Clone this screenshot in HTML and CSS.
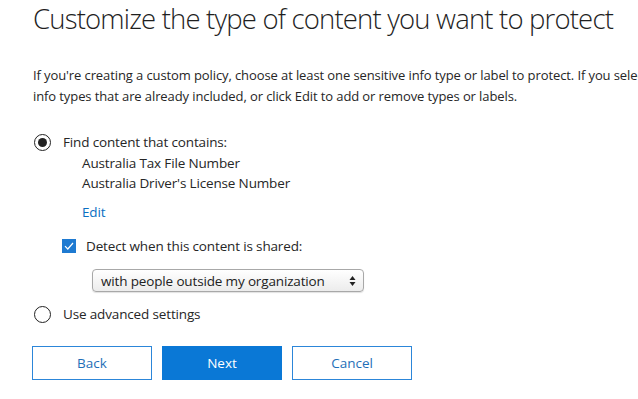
FILE: index.html
```html
<!DOCTYPE html>
<html lang="en">
<head>
<meta charset="UTF-8" />
<meta name="viewport" content="width=device-width, initial-scale=1" />
<title>Customize content</title>
<link rel="stylesheet" href="styles.css">
</head>
<body>

<div id="page">
  <h1 class="title">Customize the type of content you want to protect</h1>

  <p class="intro">If you're creating a custom policy, choose at least one sensitive info type or label to protect. If you select a template, you can keep the<br>info types that are already included, or click Edit to add or remove types or labels.</p>

  <div class="option">
    <span class="radio checked"></span>
    <span class="option-label">Find content that contains:</span>
  </div>
  <div class="types">
    <div>Australia Tax File Number</div>
    <div>Australia Driver's License Number</div>
    <a class="edit-link" href="#">Edit</a>
  </div>

  <div class="shared">
    <span class="checkbox">
      <svg width="10" height="8" viewBox="0 0 10 8"><path d="M1 4.2 L3.8 7 L9 1" fill="none" stroke="#fff" stroke-width="1.2"/></svg>
    </span>
    <span class="option-label">Detect when this content is shared:</span>
  </div>
  <div class="select-row">
    <div class="select">
      <span>with people outside my organization</span>
      <svg width="7" height="12" viewBox="0 0 7 12"><path d="M0.5 5 L3.5 1 L6.5 5 Z M0.5 7 L3.5 11 L6.5 7 Z" fill="#222"/></svg>
    </div>
  </div>

  <div class="option advanced">
    <span class="radio"></span>
    <span class="option-label">Use advanced settings</span>
  </div>

  <div class="buttons">
    <button class="btn">Back</button>
    <button class="btn primary">Next</button>
    <button class="btn">Cancel</button>
  </div>
</div>

</body>
</html>
```

FILE: styles.css
```css
html, body {
  margin: 0;
  padding: 0;
  background: #fff;
  overflow: hidden;
}

#page {
  width: 638px;
  height: 399px;
  padding: 0 0 0 33px;
  box-sizing: border-box;
  font-family: 'Open Sans', 'Noto Sans', sans-serif;
  color: #262626;
  overflow: hidden;
}

.title {
  margin: 0;
  padding-top: 1px;
  font-size: 27.5px;
  font-weight: 300;
  line-height: 36px;
  white-space: nowrap;
  letter-spacing: -0.82px;
  color: #1f1f1f;
}

.intro {
  margin: 28px 0 0;
  font-size: 13px;
  line-height: 21px;
  letter-spacing: -0.1px;
  white-space: nowrap;
}

.option {
  display: flex;
  align-items: center;
  gap: 12px;
  margin-top: 25px;
  height: 20px;
}

.option-label {
  font-size: 13.5px;
  letter-spacing: -0.15px;
}

.radio {
  width: 15px;
  height: 15px;
  border: 1.5px solid #222;
  border-radius: 50%;
  margin-left: 1px;
  display: flex;
  align-items: center;
  justify-content: center;
}

.radio.checked::after {
  content: '';
  width: 9px;
  height: 9px;
  border-radius: 50%;
  background: #222;
}

.types {
  padding-left: 49px;
  font-size: 13.5px;
  letter-spacing: -0.15px;
  line-height: 20px;
  margin-top: 1px;
}

.edit-link {
  display: block;
  margin-top: 9px;
  color: #0a6fc2;
  text-decoration: none;
}

.shared {
  display: flex;
  align-items: center;
  gap: 10px;
  margin-left: 29px;
  margin-top: 15px;
  height: 18px;
}

.checkbox {
  width: 14px;
  height: 14px;
  background: #1e7ad1;
  display: flex;
  align-items: center;
  justify-content: center;
}

.select-row {
  margin-top: 14px;
  padding-left: 59px;
}

.select {
  width: 272px;
  height: 23px;
  box-sizing: border-box;
  border: 1px solid #a8a8a8;
  border-radius: 4px;
  background: linear-gradient(#ffffff, #ececec);
  box-shadow: 0 1px 1px rgba(0,0,0,0.12);
  display: flex;
  align-items: center;
  justify-content: space-between;
  padding: 0 7px 0 8px;
  font-size: 13.5px;
  letter-spacing: -0.15px;
  color: #222;
}

.advanced {
  margin-top: 12px;
}

.buttons {
  display: flex;
  gap: 10px;
  margin-top: 22px;
  margin-left: -1px;
}

.btn {
  width: 120px;
  height: 34px;
  border: 1px solid #2c86d9;
  background: #fff;
  color: #1f6fb8;
  font-family: 'Open Sans', 'Noto Sans', sans-serif;
  font-size: 13.5px;
  padding: 0;
}

.btn.primary {
  background: #0a78d6;
  border-color: #0a78d6;
  color: #fff;
}
```
